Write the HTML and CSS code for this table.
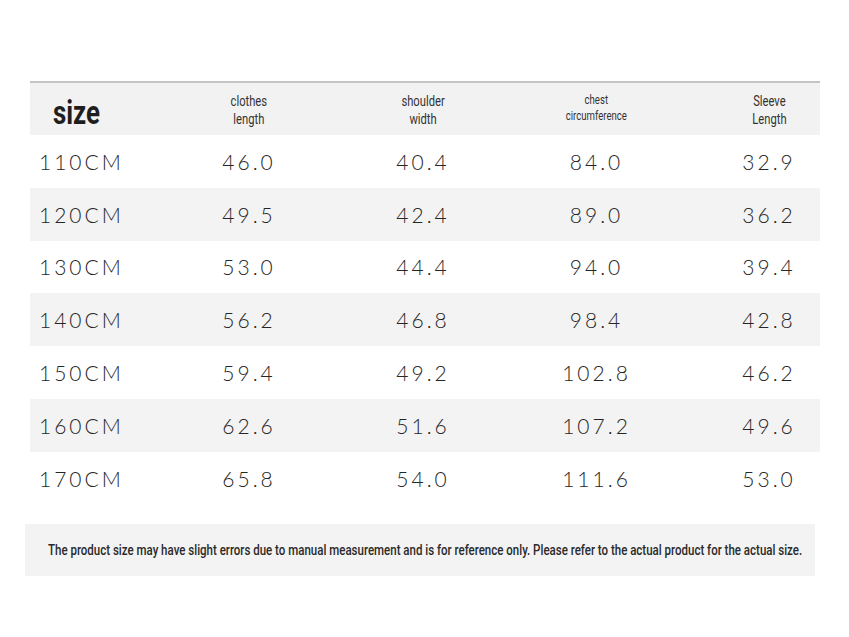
FILE: index.html
```html
<!DOCTYPE html>
<html>
<head>
<meta charset="utf-8">
<link rel="stylesheet" href="styles.css">
</head>
<body>
<div class="chart">
  <div class="row head">
    <div class="cell first size"><span class="cond">size</span></div>
    <div class="cell hd"><span class="cond">clothes<br>length</span></div>
    <div class="cell hd"><span class="cond">shoulder<br>width</span></div>
    <div class="cell hd small"><span class="cond">chest<br>circumference</span></div>
    <div class="cell hd last"><span class="cond">Sleeve<br>Length</span></div>
  </div>
  <div class="row"><div class="cell first">110CM</div><div class="cell">46.0</div><div class="cell">40.4</div><div class="cell">84.0</div><div class="cell last">32.9</div></div>
  <div class="row alt"><div class="cell first">120CM</div><div class="cell">49.5</div><div class="cell">42.4</div><div class="cell">89.0</div><div class="cell last">36.2</div></div>
  <div class="row"><div class="cell first">130CM</div><div class="cell">53.0</div><div class="cell">44.4</div><div class="cell">94.0</div><div class="cell last">39.4</div></div>
  <div class="row alt"><div class="cell first">140CM</div><div class="cell">56.2</div><div class="cell">46.8</div><div class="cell">98.4</div><div class="cell last">42.8</div></div>
  <div class="row"><div class="cell first">150CM</div><div class="cell">59.4</div><div class="cell">49.2</div><div class="cell">102.8</div><div class="cell last">46.2</div></div>
  <div class="row alt"><div class="cell first">160CM</div><div class="cell">62.6</div><div class="cell">51.6</div><div class="cell">107.2</div><div class="cell last">49.6</div></div>
  <div class="row"><div class="cell first">170CM</div><div class="cell">65.8</div><div class="cell">54.0</div><div class="cell">111.6</div><div class="cell last">53.0</div></div>
</div>
<div class="note"><span class="note-text">The product size may have slight errors due to manual measurement and is for reference only. Please refer to the actual product for the actual size.</span></div>
</body>
</html>
```
FILE: styles.css
```css
html, body {
  margin: 0;
  padding: 0;
  background: #ffffff;
}
body {
  padding-top: 81px;
}
.chart {
  margin-left: 30px;
  width: 790px;
  border-top: 2px solid #c4c4c4;
}
.row {
  display: grid;
  grid-template-columns: 132px 174px 174px 173px 1fr;
  height: 52.8px;
  align-items: center;
  font-family: "Lato", "DejaVu Sans", sans-serif;
  font-weight: 300;
  font-size: 21px;
  letter-spacing: 3px;
  color: #262626;
}
.row.alt {
  background: #f3f3f3;
}
.row.head {
  height: 52px;
  background: #f2f2f2;
}
.cell {
  text-align: center;
}
.cell.first {
  text-align: left;
  padding-left: 9px;
}
.cell.last {
  padding-left: 35px;
}
.cond {
  display: inline-block;
  transform: scaleX(0.8);
  transform-origin: center top;
}
.size {
  font-family: "Roboto", "DejaVu Sans", sans-serif;
  font-weight: bold;
  font-size: 34px;
  letter-spacing: 0;
  color: #1e1e1e;
  padding-left: 23px !important;
  padding-top: 6px;
}
.size .cond {
  transform: scaleX(0.76);
  transform-origin: left top;
}
.hd {
  font-family: "Roboto", "DejaVu Sans", sans-serif;
  font-weight: normal;
  font-size: 14px;
  line-height: 18px;
  letter-spacing: 0;
  color: #333;
  align-self: start;
  padding-top: 9px;
}
.hd.small {
  font-size: 12px;
  line-height: 16px;
  padding-top: 9px;
}
.note {
  margin: 19px 0 0 25px;
  width: 790px;
  height: 52px;
  background: #f3f3f3;
  display: flex;
  align-items: center;
  padding-left: 23px;
  box-sizing: border-box;
  font-family: "Roboto", "DejaVu Sans", sans-serif;
  font-weight: 500;
  font-size: 15px;
  color: #2a2a2a;
  white-space: nowrap;
}
.note-text {
  display: inline-block;
  transform: scaleX(0.767);
  transform-origin: left center;
}
```
